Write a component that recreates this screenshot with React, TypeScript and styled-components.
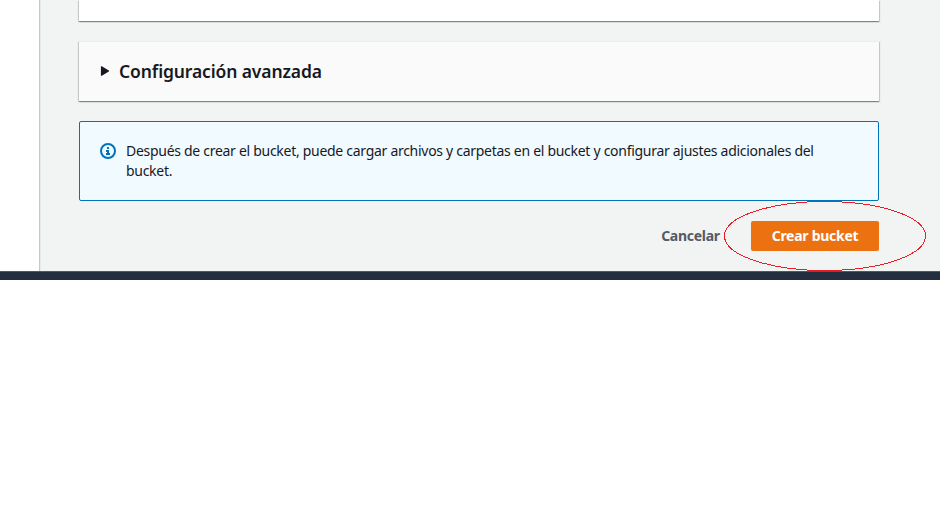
import React from "react";
import styled, { createGlobalStyle } from "styled-components";

const GlobalStyle = createGlobalStyle`
  * { box-sizing: border-box; }
  html, body { margin: 0; background: #fff; }
  body { font-family: "Noto Sans", "Open Sans", sans-serif; color: #16191f; overflow: hidden; }
`;

const Page = styled.div`
  width: 940px;
  height: 513px;
  background: #fff;
`;

const Shell = styled.div`
  display: flex;
  height: 271px;
`;

const SideRail = styled.aside`
  width: 39px;
  flex: none;
  background: #fff;
`;

const Main = styled.main`
  flex: 1;
  border-left: 1px solid #c4c9c9;
  background: #f2f3f3;
  box-shadow: inset 1px 0 0 #e6e9e9;
  padding: 0 61px 0 39px;
`;

const Card = styled.section<{ $kind: "tail" | "header" }>`
  display: flex;
  align-items: center;
  width: 800px;
  height: ${(p) => (p.$kind === "tail" ? 21 : 60)}px;
  margin-bottom: 20px;
  padding: 0 20px 2px;
  background: ${(p) => (p.$kind === "tail" ? "#fff" : "#fafafa")};
  border-top: ${(p) => (p.$kind === "tail" ? "0" : "1px solid #eaeded")};
  box-shadow: 0 1px 1px 0 rgba(0, 28, 36, 0.3), 1px 1px 1px 0 rgba(0, 28, 36, 0.15),
    -1px 1px 1px 0 rgba(0, 28, 36, 0.15);
`;

const Caret = styled.svg`
  width: 12px;
  height: 12px;
  flex: none;
  margin-right: 8px;
`;

const Heading = styled.h2`
  margin: 0;
  font-size: 17.5px;
  line-height: 22px;
  font-weight: 600;
  letter-spacing: -0.12px;
  white-space: nowrap;
`;

const Alert = styled.div`
  display: flex;
  width: 800px;
  height: 80px;
  padding: 19px 20px;
  border: 1px solid #0073bb;
  border-radius: 2px;
  background: #f1faff;
`;

const InfoIcon = styled.svg`
  width: 16px;
  height: 16px;
  flex: none;
  margin: 2px 10px 0 0;
`;

const Message = styled.p`
  margin: 0;
  font-size: 14px;
  line-height: 20px;
  letter-spacing: -0.288px;
  white-space: nowrap;
`;

const Actions = styled.div`
  display: flex;
  justify-content: flex-end;
  width: 800px;
  margin-top: 20px;
`;

const Button = styled.button<{ $primary?: boolean }>`
  width: ${(p) => (p.$primary ? 128 : 101)}px;
  height: 30px;
  margin-left: 10px;
  padding: 0;
  border: 0;
  border-radius: 2px;
  background: ${(p) => (p.$primary ? "#ec7211" : "transparent")};
  color: ${(p) => (p.$primary ? "#fff" : "#545b64")};
  font: 700 14px/20px "Noto Sans", "Open Sans", sans-serif;
  letter-spacing: -0.27px;
  white-space: nowrap;
`;

const Footer = styled.footer`
  height: 9px;
  border-top: 1px solid #4f5965;
  background: #232f3e;
`;

const Annotation = styled.svg`
  position: absolute;
  left: 720px;
  top: 198px;
  width: 210px;
  height: 76px;
  pointer-events: none;
`;

export default function App() {
  return (
    <Page>
      <GlobalStyle />
      <Shell>
        <SideRail />
        <Main>
          <Card $kind="tail" />
          <Card $kind="header">
            <Caret viewBox="0 0 12 12">
              <path d="M2.5 1.8 L9.5 6 L2.5 10.2 Z" fill="#16191f" stroke="#16191f" strokeWidth="1.2" strokeLinejoin="round" />
            </Caret>
            <Heading>Configuración avanzada</Heading>
          </Card>
          <Alert>
            <InfoIcon viewBox="0 0 16 16">
              <circle cx="8" cy="8" r="7" fill="none" stroke="#0073bb" strokeWidth="2" />
              <path d="M7 4h2v2H7zM6 7h3v3h1v2H6v-2h1V9H6z" fill="#0073bb" />
            </InfoIcon>
            <Message>
              Después de crear el bucket, puede cargar archivos y carpetas en el bucket y configurar ajustes adicionales del
              <br />
              bucket.
            </Message>
          </Alert>
          <Actions>
            <Button>Cancelar</Button>
            <Button $primary>Crear bucket</Button>
          </Actions>
        </Main>
      </Shell>
      <Footer />
      <Annotation viewBox="720 198 210 76">
        <ellipse cx="825" cy="236" rx="100.5" ry="34.5" fill="none" stroke="#ed1c24" strokeWidth="1" shapeRendering="crispEdges" />
      </Annotation>
    </Page>
  );
}
